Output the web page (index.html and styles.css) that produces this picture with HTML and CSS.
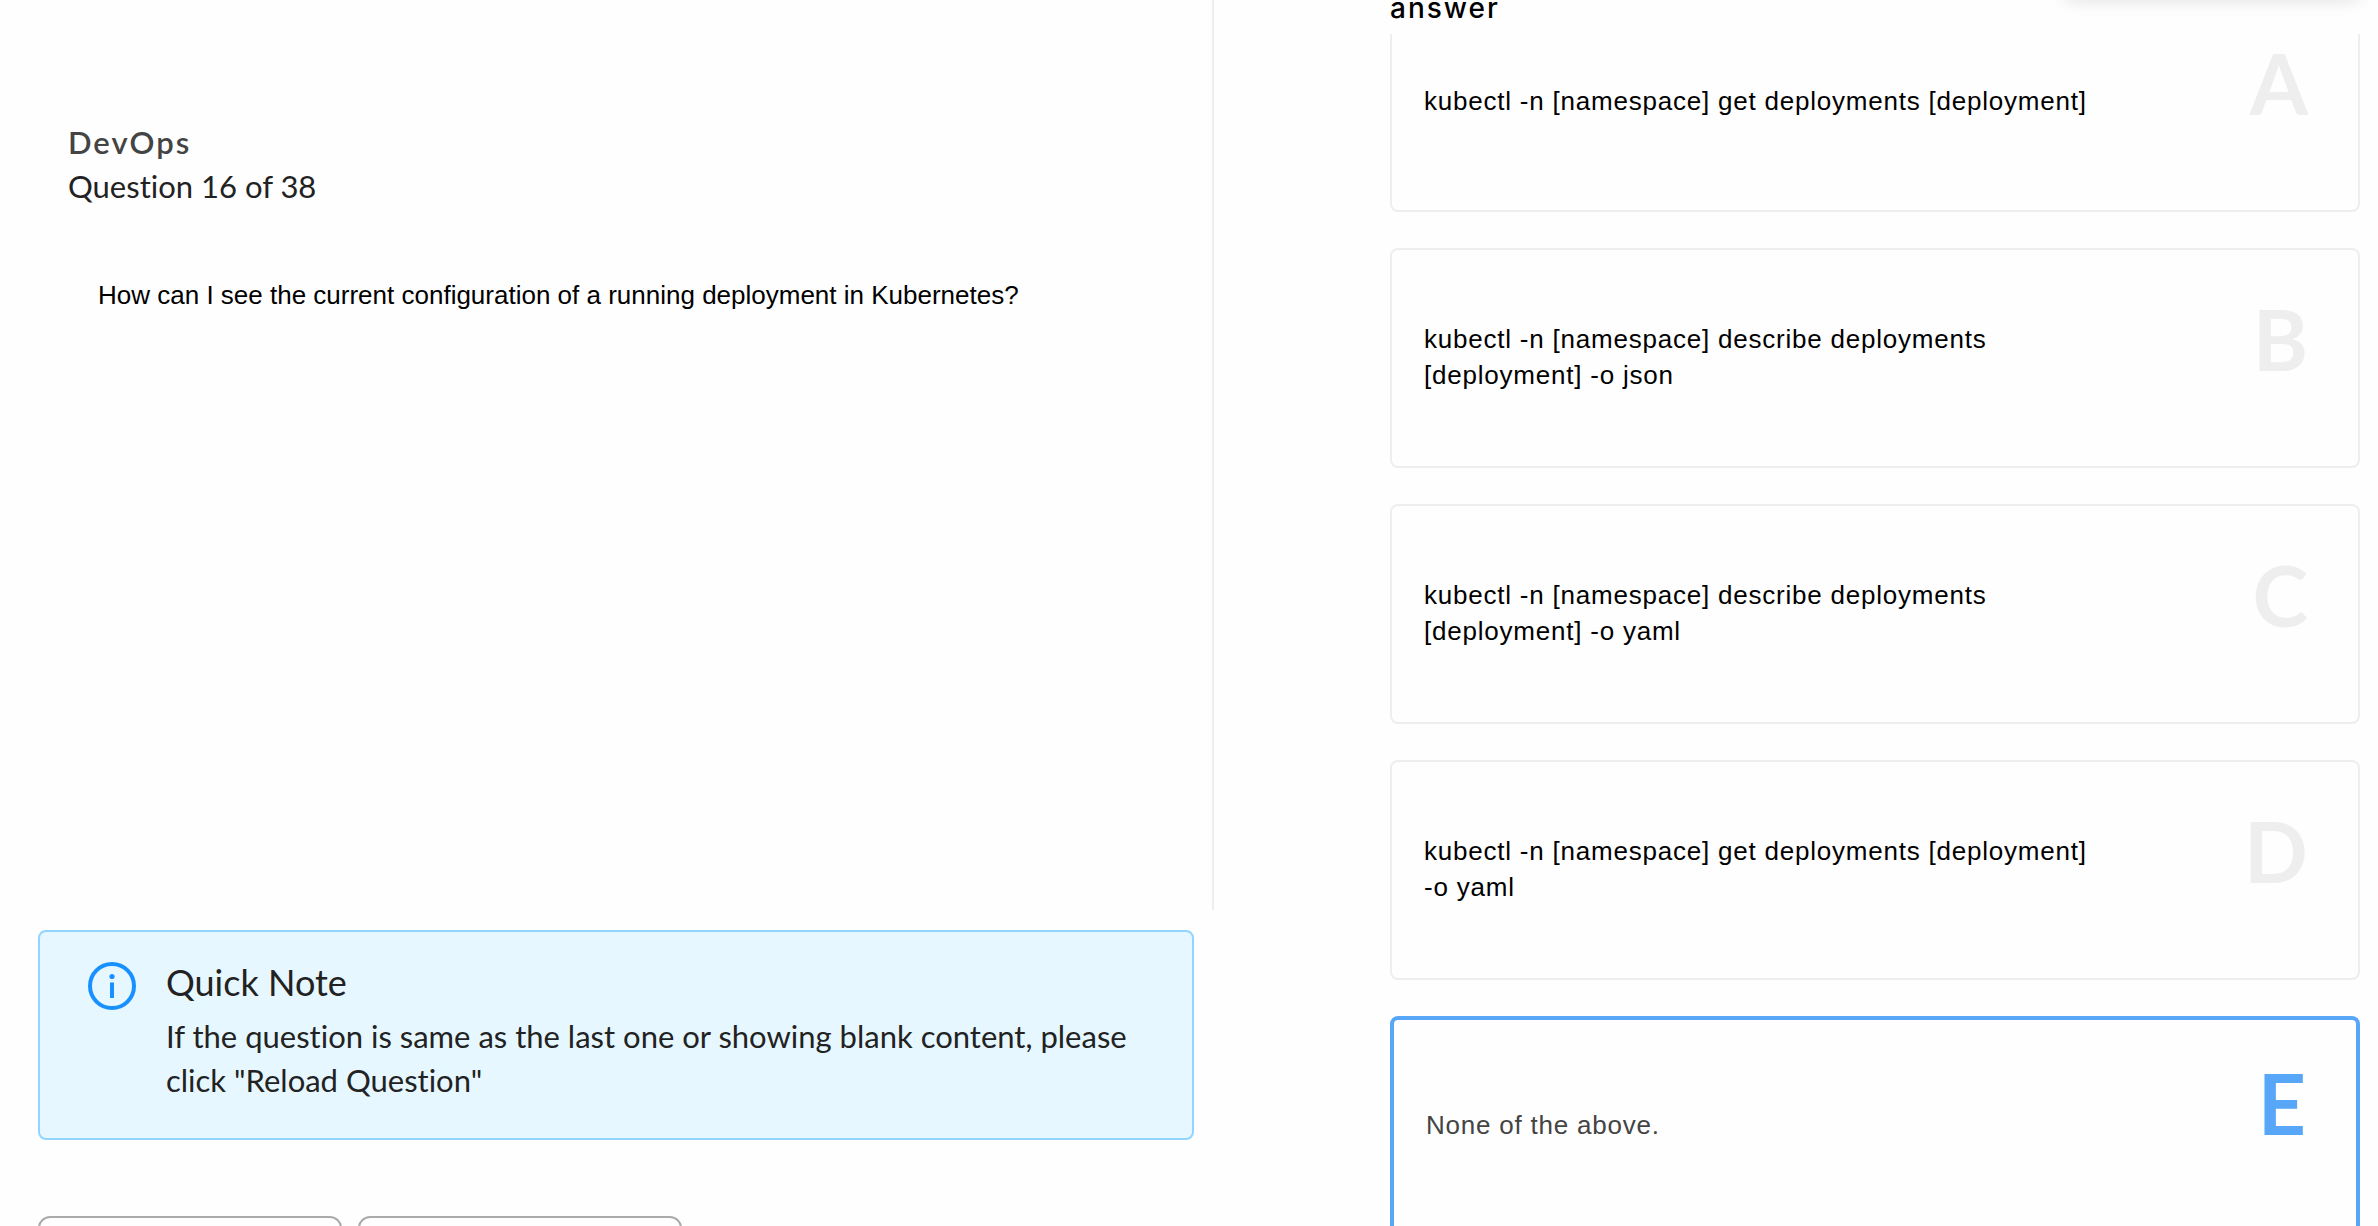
FILE: index.html
```
<!DOCTYPE html>
<html lang="en">
<head>
<meta charset="utf-8">
<title>DevOps</title>
<link rel="stylesheet" href="styles.css">
</head>
<body>
<main class="quiz">
  <section class="left">
    <div class="question">
      <h1 class="subject">DevOps</h1>
      <p class="progress">Question 16 of 38</p>
      <p class="prompt">How can I see the current configuration of a running deployment in Kubernetes?</p>
    </div>
    <aside class="note">
      <svg class="note-icon" viewBox="0 0 48 48" aria-hidden="true">
        <circle cx="24" cy="24" r="22" fill="none" stroke="#1890ff" stroke-width="4"/>
        <circle cx="24" cy="14.5" r="2.6" fill="#1890ff"/>
        <rect x="22" y="20.5" width="4" height="15.5" rx="0.5" fill="#1890ff"/>
      </svg>
      <div>
        <h2 class="note-title">Quick Note</h2>
        <p class="note-text">If the question is same as the last one or showing blank content, please click "Reload Question"</p>
      </div>
    </aside>
    <div class="actions">
      <button class="action" type="button"></button>
      <button class="action action-wide" type="button"></button>
    </div>
  </section>
  <section class="right">
    <div class="timer"></div>
    <h2 class="heading" id="answer-heading">answer</h2>
    <div class="scroll">
      <div class="options" role="radiogroup" aria-labelledby="answer-heading">
        <label class="option"><input type="radio" name="answer"><span class="text">kubectl -n [namespace] get deployments [deployment]</span><span class="letter">A</span></label>
        <label class="option"><input type="radio" name="answer"><span class="text">kubectl -n [namespace] describe deployments [deployment] -o json</span><span class="letter">B</span></label>
        <label class="option"><input type="radio" name="answer"><span class="text">kubectl -n [namespace] describe deployments [deployment] -o yaml</span><span class="letter">C</span></label>
        <label class="option"><input type="radio" name="answer"><span class="text">kubectl -n [namespace] get deployments [deployment] -o yaml</span><span class="letter">D</span></label>
        <label class="option selected"><input type="radio" name="answer" checked><span class="text">None of the above.</span><span class="letter">E</span></label>
      </div>
    </div>
  </section>
</main>
</body>
</html>
```
FILE: styles.css
```
* { box-sizing: border-box; }

body {
  margin: 0;
  background: #fefefe;
  color: #222;
  font-family: Lato, "Open Sans", sans-serif;
  font-variant-ligatures: none;
}

h1, h2, p { margin: 0; font-weight: 400; }

.quiz {
  display: grid;
  grid-template-columns: 1214fr 1164fr;
  height: 100vh;
  overflow: hidden;
}

/* Question side */
.left {
  display: flex;
  flex-direction: column;
  height: calc(100vh + 70px);
}

.question {
  flex: 1;
  padding: 120px 68px 0;
  border-right: 2px solid #eee;
}

.subject {
  color: #444;
  font-size: 31px;
  font-weight: 600;
  line-height: 44px;
  letter-spacing: 2px;
}

.progress { font-size: 31px; line-height: 44px; }

.prompt {
  margin-top: 69px;
  padding-left: 30px;
  color: #000;
  font: 26px/36px "Liberation Sans", Arial, sans-serif;
}

.note {
  display: flex;
  gap: 30px;
  margin: 20px 20px 0 38px;
  padding: 30px 40px 36px 48px;
  background: #e6f7ff;
  border: 2px solid #91d5ff;
  border-radius: 8px;
}

.note-icon { flex: none; width: 48px; height: 48px; }
.note-title { margin-bottom: 12px; font-size: 36px; line-height: 40px; }
.note-text { font-size: 31px; line-height: 44px; }

.actions { display: flex; gap: 16px; margin: 76px 0 0 38px; }

.action {
  width: 304px;
  height: 80px;
  background: #fefefe;
  border: 2px solid #aaa;
  border-radius: 12px;
}

.action-wide { width: 324px; }

/* Answer side */
.right {
  position: relative;
  display: flex;
  flex-direction: column;
  min-height: 0;
  padding: 0 18px 0 176px;
}

.timer {
  position: absolute;
  right: 18px;
  bottom: 100%;
  width: 296px;
  height: 60px;
  border-radius: 8px;
  box-shadow: 0 2px 16px rgba(0, 0, 0, .1);
}

.heading {
  padding-bottom: 18px;
  color: #000;
  font: 500 28px/16px Inter, sans-serif;
  letter-spacing: 2px;
}

.scroll { flex: 1; min-height: 0; overflow: hidden; }

.options {
  display: flex;
  flex-direction: column;
  gap: 36px;
  margin-top: -42px;
}

.option {
  position: relative;
  display: flex;
  flex: none;
  align-items: center;
  justify-content: space-between;
  height: 220px;
  padding: 0 50px 2px 32px;
  border: 2px solid #eee;
  border-radius: 8px;
  color: #000;
}

.option input { position: absolute; opacity: 0; }

.text {
  max-width: 672px;
  font: 26px/36px "Liberation Sans", Arial, sans-serif;
  letter-spacing: 0.03em;
}

.letter {
  align-self: flex-start;
  padding-top: 53px;
  color: #eee;
  font-size: 84px;
  font-weight: 700;
  line-height: 72px;
}

.selected { border: 4px solid #58a6f8; color: #444; }
.selected .letter { padding-top: 47px; color: #58a6f8; }
```
